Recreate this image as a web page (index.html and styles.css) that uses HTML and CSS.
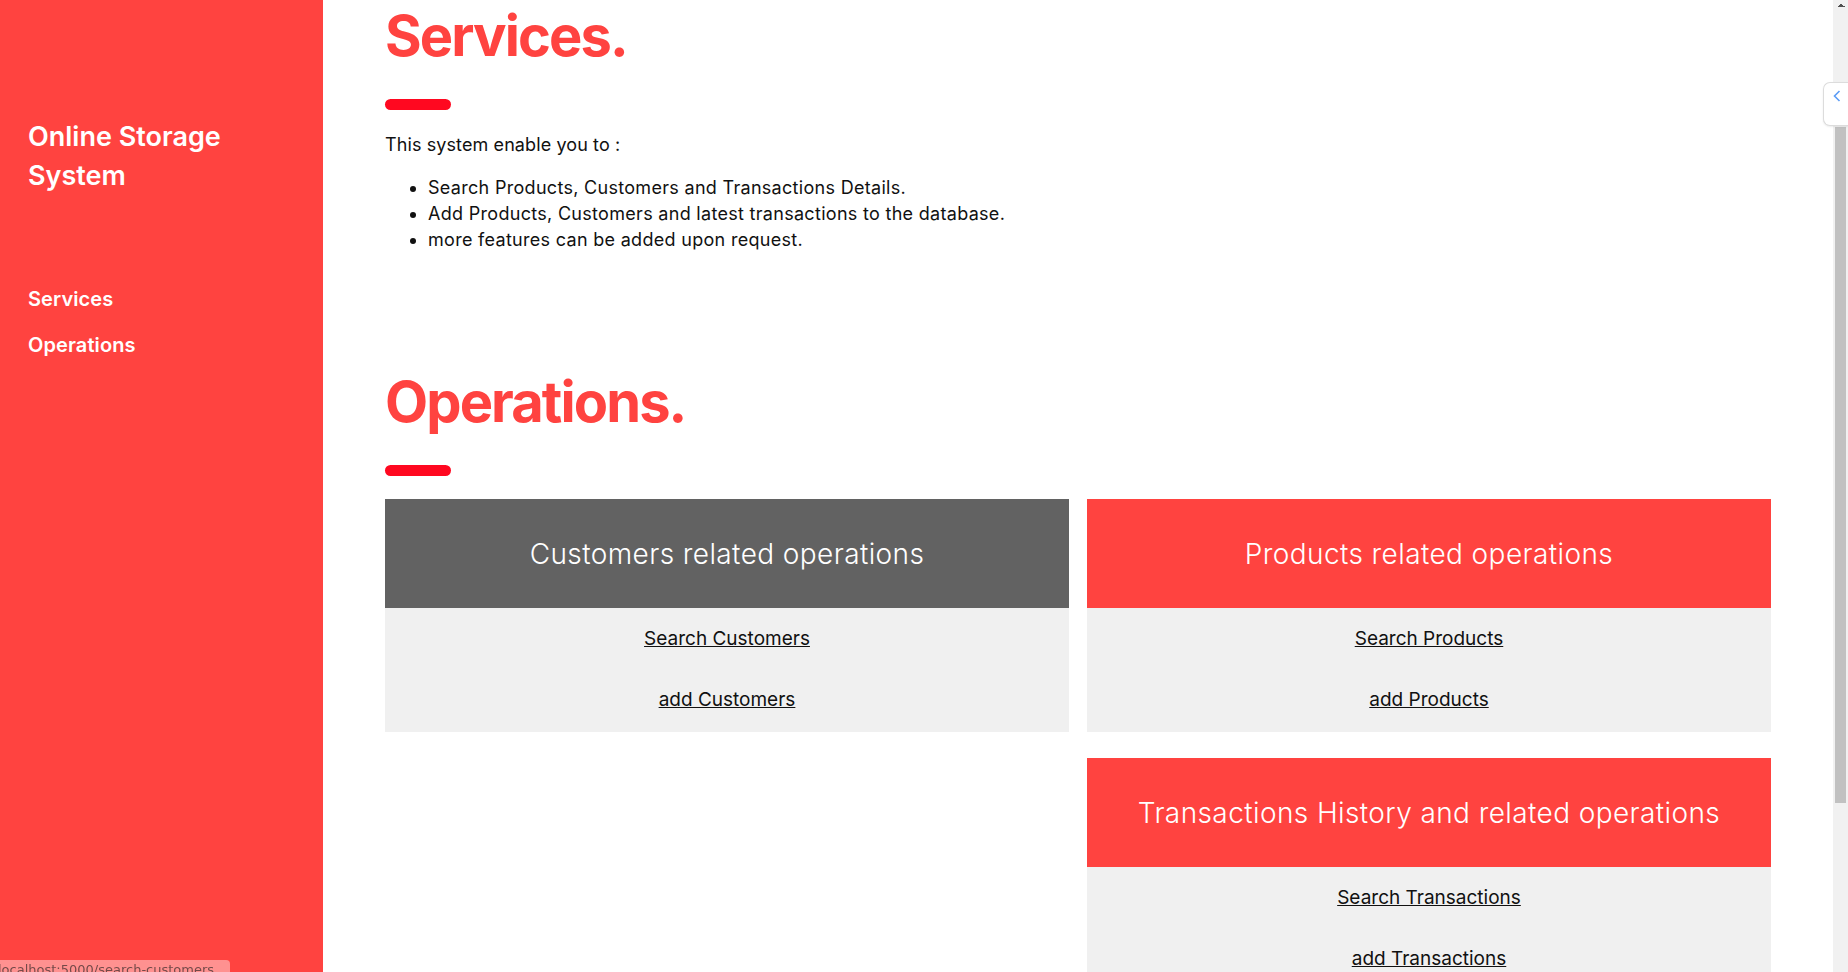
FILE: index.html
```html
<!DOCTYPE html>
<html lang="en">
<head>
<meta charset="utf-8">
<title>Online Storage System</title>
<link rel="stylesheet" href="styles.css">
</head>
<body>
<div class="layout">
  <aside class="sidebar">
    <h2 class="brand">Online Storage System</h2>
    <nav class="nav">
      <a href="#services">Services</a>
      <a href="#operations">Operations</a>
    </nav>
  </aside>
  <main class="main" id="main">
    <div class="main-inner">
      <section class="section" id="services">
        <h1 class="title">Services.</h1>
        <div class="rule"></div>
        <p class="intro">This system enable you to :</p>
        <ul class="features">
          <li>Search Products, Customers and Transactions Details.</li>
          <li>Add Products, Customers and latest transactions to the database.</li>
          <li>more features can be added upon request.</li>
        </ul>
      </section>
      <section class="section" id="operations">
        <h1 class="title">Operations.</h1>
        <div class="rule"></div>
        <div class="ops">
          <div class="card">
            <div class="card-head card-head--dark">Customers related operations</div>
            <div class="card-body">
              <a href="/search-customers">Search Customers</a>
              <a href="/add-customers">add Customers</a>
            </div>
          </div>
          <div class="card">
            <div class="card-head">Products related operations</div>
            <div class="card-body">
              <a href="/search-products">Search Products</a>
              <a href="/add-products">add Products</a>
            </div>
          </div>
          <div class="card card--end">
            <div class="card-head">Transactions History and related operations</div>
            <div class="card-body">
              <a href="/search-transactions">Search Transactions</a>
              <a href="/add-transactions">add Transactions</a>
            </div>
          </div>
        </div>
      </section>
    </div>
  </main>
  <div class="scrollbar" aria-hidden="true">
    <div class="sb-button"></div>
    <div class="sb-track"><div class="sb-thumb"></div></div>
    <div class="sb-button sb-button--end"></div>
  </div>
</div>
<div class="ext-tab">
  <svg class="ext-chevron" width="8" height="12" viewBox="0 0 8 12"><polyline points="6.5,1 1.5,6 6.5,11" fill="none" stroke="#5b9cf6" stroke-width="1.6"/></svg>
</div>
<div class="status-bubble">localhost:5000/search-customers</div>
<script src="script.js"></script>
</body>
</html>
```
FILE: styles.css
```css
html, body {
  margin: 0;
  height: 100%;
  overflow: hidden;
}
body {
  font-family: Inter, "Open Sans", sans-serif;
  color: #111;
  background: #fff;
}
.layout {
  display: flex;
  height: 100vh;
}
.sidebar {
  flex: 0 0 323px;
  box-sizing: border-box;
  background: #ff4340;
  color: #fff;
  padding: 117px 28px 0 28px;
}
.brand {
  margin: 0;
  max-width: 240px;
  font-size: 27px;
  line-height: 39px;
  font-weight: 600;
  letter-spacing: 0;
}
.nav {
  display: flex;
  flex-direction: column;
  align-items: flex-start;
  margin-top: 81px;
}
.nav a {
  color: #fff;
  text-decoration: none;
  font-size: 20px;
  line-height: 46px;
  font-weight: 600;
  letter-spacing: 0.1px;
}
.main {
  flex: 1;
  min-width: 0;
  overflow-y: scroll;
  scrollbar-width: none;
}
.main::-webkit-scrollbar {
  display: none;
}
.main-inner {
  padding: 48px 62px 202px 62px;
}
.scrollbar {
  flex: 0 0 15px;
  display: flex;
  flex-direction: column;
  background: #f1f1f1;
}
.sb-button {
  flex: 0 0 15px;
  background-image:
    linear-gradient(to top left, #505050 50%, transparent 50%),
    linear-gradient(to top right, #505050 50%, transparent 50%);
  background-size: 4px 4px, 4px 4px;
  background-position: 3.5px 3px, 7.5px 3px;
  background-repeat: no-repeat;
}
.sb-button--end {
  background-image: none;
}
.sb-track {
  flex: 1;
}
.sb-thumb {
  margin: 112px 2px 0 2px;
  height: 676px;
  background: #c1c1c1;
}
.section {
  padding-top: 116px;
}
.title {
  margin: 0;
  font-size: 56px;
  line-height: 67px;
  font-weight: 700;
  color: #ff4340;
  letter-spacing: -1.9px;
}
.rule {
  width: 66px;
  height: 11px;
  border-radius: 6px;
  background: #ff0820;
  margin-top: 29px;
}
.intro {
  margin: 22px 0 0 0;
  font-size: 18px;
  line-height: 26px;
  letter-spacing: 0.1px;
}
.features {
  margin: 17px 0 0 0;
  padding-left: 43px;
  font-size: 18px;
  line-height: 26px;
  letter-spacing: 0.3px;
}
.ops {
  display: grid;
  grid-template-columns: 1fr 1fr;
  column-gap: 18px;
  row-gap: 26px;
  margin-top: 23px;
}
.card--end {
  grid-column: 2;
}
.card-head {
  height: 109px;
  display: flex;
  align-items: center;
  justify-content: center;
  background: #ff4340;
  color: #fff;
  font-size: 28px;
  font-weight: 300;
  letter-spacing: 0.4px;
}
.card-head--dark {
  background: #626262;
}
.card-body {
  background: #f0f0f0;
  display: flex;
  flex-direction: column;
  align-items: center;
  gap: 35px;
  padding: 18px 0 19px 0;
}
.card-body a {
  color: #111;
  font-size: 19px;
  line-height: 26px;
  text-decoration: underline;
}
.ext-tab {
  position: fixed;
  top: 82px;
  right: 0;
  width: 25px;
  height: 44px;
  box-sizing: border-box;
  background: #fff;
  border: 1px solid #dcdcdc;
  border-right: none;
  border-radius: 7px 0 0 7px;
  box-shadow: 0 1px 2px rgba(0, 0, 0, 0.08);
  z-index: 10;
}
.ext-chevron {
  position: absolute;
  left: 9px;
  top: 7px;
}
.status-bubble {
  position: fixed;
  left: 0;
  bottom: -10px;
  width: 230px;
  height: 22px;
  box-sizing: border-box;
  padding-left: 0;
  text-indent: -2px;
  overflow: hidden;
  white-space: nowrap;
  font-family: "DejaVu Sans", sans-serif;
  font-size: 13px;
  line-height: 20px;
  color: rgba(70, 50, 50, 0.75);
  background: rgba(255, 255, 255, 0.42);
  border-top-right-radius: 4px;
  z-index: 10;
}
```
FILE: script.js
```js
document.getElementById('main').scrollTop = 161;
```
